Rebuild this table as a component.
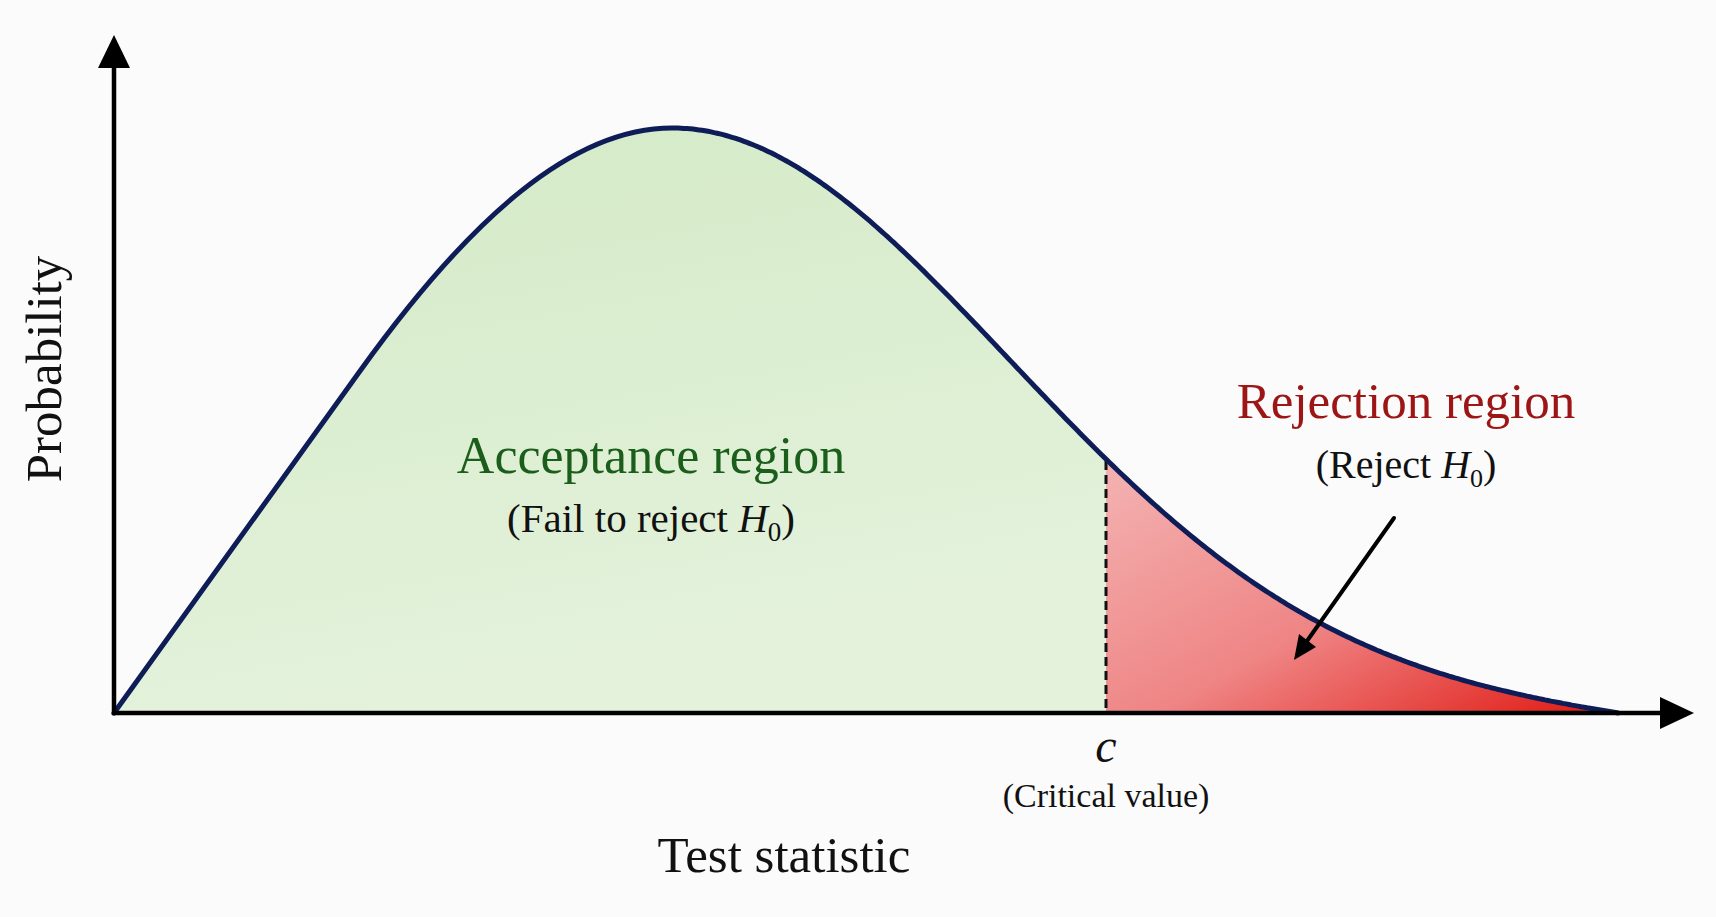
import React from "react";

// geometry of the plot, in page pixels
const X0 = 114; // y axis
const Y0 = 713; // x axis
const PEAK_X = 672;
const PEAK_Y = 128;
const CRIT_X = 1106;
const END_X = 1618;
const SIGMA = 336;

// right half of the curve: a gaussian tail pulled down so it meets the axis at END_X
function rightY(x: number) {
  const d = x - PEAK_X;
  const span = END_X - PEAK_X;
  const c = Math.exp(-(span * span) / (2 * SIGMA * SIGMA));
  const g = Math.exp(-(d * d) / (2 * SIGMA * SIGMA)) - c * Math.pow(d / span, 6);
  return Y0 - (Y0 - PEAK_Y) * Math.max(g, 0);
}

function samples(from: number, to: number, step = 3) {
  let d = "";
  for (let x = from; x < to; x += step) d += ` L ${x} ${rightY(x).toFixed(1)}`;
  d += ` L ${to} ${rightY(to).toFixed(1)}`;
  return d;
}

// left half: straight rise, then a cubic easing into the peak
const LEFT = `M ${X0} ${Y0} L 360 371 C 470 218 572 ${PEAK_Y} ${PEAK_X} ${PEAK_Y}`;

const serif = "'Liberation Serif', 'DejaVu Serif', serif";

export default function App() {
  const critY = rightY(CRIT_X);
  const greenPath = `${LEFT}${samples(PEAK_X, CRIT_X)} L ${CRIT_X} ${Y0} Z`;
  const redPath = `M ${CRIT_X} ${critY.toFixed(1)}${samples(CRIT_X, END_X)} L ${END_X} ${Y0} L ${CRIT_X} ${Y0} Z`;
  const linePath = `${LEFT}${samples(PEAK_X, END_X)}`;

  return (
    <div className="w-[1716px] h-[917px] bg-[#fbfbfb] overflow-hidden">
      <svg width="1716" height="917" viewBox="0 0 1716 917" className="block">
        <defs>
          <linearGradient id="accept" x1="0" y1="0" x2="0.3" y2="1">
            <stop offset="0" stopColor="#d3eac6" />
            <stop offset="1" stopColor="#e4f2dc" />
          </linearGradient>
          <linearGradient id="reject" x1="0" y1="0" x2="1" y2="0.9">
            <stop offset="0" stopColor="#f4b3b3" />
            <stop offset="0.55" stopColor="#ef8585" />
            <stop offset="1" stopColor="#e1221c" />
          </linearGradient>
        </defs>

        {/* shaded regions */}
        <path d={greenPath} fill="url(#accept)" />
        <path d={redPath} fill="url(#reject)" />

        {/* critical value marker */}
        <line x1={CRIT_X} y1={critY + 2} x2={CRIT_X} y2={711} stroke="#111" strokeWidth="3" strokeDasharray="9 5" />

        {/* density curve */}
        <path d={linePath} fill="none" stroke="#0e1c58" strokeWidth="5" strokeLinejoin="round" strokeLinecap="round" />

        {/* axes */}
        <line x1={X0} y1="715" x2={X0} y2="64" stroke="#000" strokeWidth="4.5" />
        <polygon points="114,35 98,68 130,68" fill="#000" />
        <line x1="112" y1={Y0} x2="1664" y2={Y0} stroke="#000" strokeWidth="4.5" />
        <polygon points="1694,713 1660,697 1660,729" fill="#000" />

        {/* pointer into the rejection region */}
        <line x1="1394" y1="518" x2="1307" y2="641" stroke="#000" strokeWidth="4" strokeLinecap="round" />
        <polygon points="1294,660 1316,647 1299,634" fill="#000" />

        {/* labels */}
        <g fontFamily={serif}>
          <text x="651" y="473" textAnchor="middle" fontSize="52" fill="#1b5e1c">
            Acceptance region
          </text>
          <text x="651" y="532" textAnchor="middle" fontSize="41" fill="#111">
            (Fail to reject <tspan fontStyle="italic">H</tspan>
            <tspan fontSize="27" dy="9">0</tspan>
            <tspan dy="-9">)</tspan>
          </text>

          <text x="1406" y="418" textAnchor="middle" fontSize="51" fill="#9c1616">
            Rejection region
          </text>
          <text x="1406" y="478" textAnchor="middle" fontSize="40" fill="#111">
            (Reject <tspan fontStyle="italic">H</tspan>
            <tspan fontSize="26" dy="9">0</tspan>
            <tspan dy="-9">)</tspan>
          </text>

          <text x="1106" y="762" textAnchor="middle" fontSize="48" fontStyle="italic" fill="#111">
            c
          </text>
          <text x="1106" y="807" textAnchor="middle" fontSize="34" fill="#111">
            (Critical value)
          </text>

          <text x="784" y="872" textAnchor="middle" fontSize="51" fill="#111">
            Test statistic
          </text>
          <text
            x="0"
            y="0"
            textAnchor="middle"
            fontSize="51"
            fill="#111"
            transform="translate(61 369) rotate(-90)"
          >
            Probability
          </text>
        </g>
      </svg>
    </div>
  );
}
